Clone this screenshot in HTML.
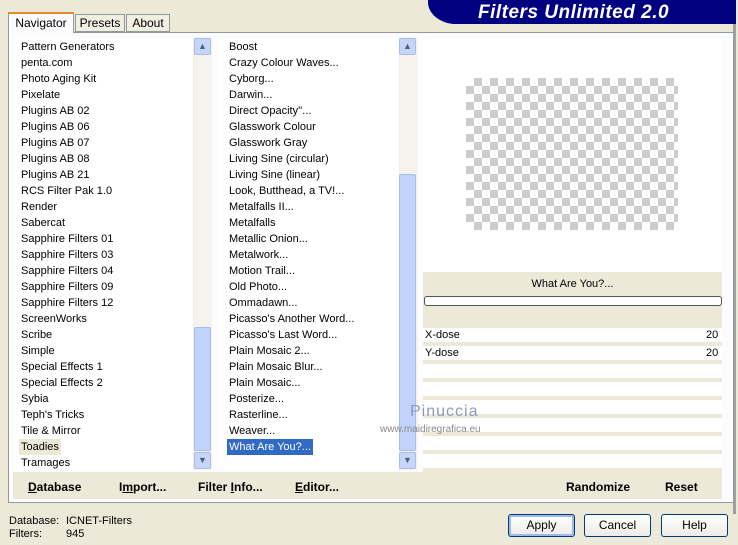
<html><head><style>
*{margin:0;padding:0;box-sizing:border-box}
body{width:738px;height:545px;background:#ece9d8;font-family:"Liberation Sans",sans-serif;font-size:11px;color:#000;position:relative;overflow:hidden}
.a{position:absolute}
.list{background:#fff}
.it{position:absolute;left:8px;height:16px;line-height:16px;white-space:nowrap}
.sb{position:absolute;background:#f4f3ee;border-left:1px solid #eee}
.arr{position:absolute;width:17px;height:17px;background:#c7d6f7;border:1px solid #a8bde8;border-radius:2px;color:#4d6185;font-size:9px;text-align:center;line-height:15px}
.thumb{position:absolute;background:#c1d3fb;border:1px solid #a6bcec;border-radius:2px}
.btn{position:absolute;top:514px;height:23px;border:1px solid #003c74;border-radius:3px;background:linear-gradient(#fff,#ecebe6);text-align:center;line-height:21px;font-size:12px}
.bb{position:absolute;top:480px;font-weight:bold;font-size:12px}
.row{position:absolute;left:423px;width:299px;height:16px;background:#fff;border-bottom:2px solid #ece9d8}
</style></head><body>
<!-- banner -->
<div class="a" style="left:428px;top:0;width:308px;height:24px;background:#000080;border-bottom-left-radius:28px 22px"></div>
<div class="a" style="left:478px;top:2px;color:#fff;font-weight:bold;font-style:italic;font-size:19px;letter-spacing:0.5px">Filters Unlimited 2.0</div>
<div class="a" style="left:733px;top:24px;width:3px;height:490px;background:#a0a0a0"></div>
<!-- tabs -->
<div class="a" style="left:8px;top:32px;width:726px;height:471px;border:1px solid #919b9c;background:#fcfcfe"></div>
<div class="a" style="left:8px;top:12px;width:66px;height:21px;border:1px solid #919b9c;border-bottom:none;border-top:2px solid #e68b2c;background:#fcfcfe;text-align:center;line-height:18px;font-size:12px">Navigator</div>
<div class="a" style="left:75px;top:14px;width:50px;height:18px;border:1px solid #919b9c;background:#f1efe2;text-align:center;line-height:17px;font-size:12px">Presets</div>
<div class="a" style="left:126px;top:14px;width:44px;height:18px;border:1px solid #919b9c;background:#f1efe2;text-align:center;line-height:17px;font-size:12px">About</div>
<!-- left list -->
<div class="a list" style="left:13px;top:37px;width:199px;height:433px">
<div class="it" style="top:2px">Pattern Generators</div><div class="it" style="top:18px">penta.com</div><div class="it" style="top:34px">Photo Aging Kit</div><div class="it" style="top:50px">Pixelate</div><div class="it" style="top:66px">Plugins AB 02</div><div class="it" style="top:82px">Plugins AB 06</div><div class="it" style="top:98px">Plugins AB 07</div><div class="it" style="top:114px">Plugins AB 08</div><div class="it" style="top:130px">Plugins AB 21</div><div class="it" style="top:146px">RCS Filter Pak 1.0</div><div class="it" style="top:162px">Render</div><div class="it" style="top:178px">Sabercat</div><div class="it" style="top:194px">Sapphire Filters 01</div><div class="it" style="top:210px">Sapphire Filters 03</div><div class="it" style="top:226px">Sapphire Filters 04</div><div class="it" style="top:242px">Sapphire Filters 09</div><div class="it" style="top:258px">Sapphire Filters 12</div><div class="it" style="top:274px">ScreenWorks</div><div class="it" style="top:290px">Scribe</div><div class="it" style="top:306px">Simple</div><div class="it" style="top:322px">Special Effects 1</div><div class="it" style="top:338px">Special Effects 2</div><div class="it" style="top:354px">Sybia</div><div class="it" style="top:370px">Teph's Tricks</div><div class="it" style="top:386px">Tile &amp; Mirror</div><div class="it" style="top:402px;left:6px;padding:0 2px;background:#ece9d8">Toadies</div><div class="it" style="top:418px">Tramages</div>
<div class="sb" style="left:180px;top:0;width:19px;height:433px"></div>
<div class="arr" style="left:181px;top:1px">▲</div>
<div class="thumb" style="left:181px;top:290px;width:17px;height:124px"></div>
<div class="arr" style="left:181px;top:415px">▼</div>
</div>
<!-- middle list -->
<div class="a list" style="left:217px;top:37px;width:202px;height:433px">
<div class="it" style="top:2px;left:12px">Boost</div><div class="it" style="top:18px;left:12px">Crazy Colour Waves...</div><div class="it" style="top:34px;left:12px">Cyborg...</div><div class="it" style="top:50px;left:12px">Darwin...</div><div class="it" style="top:66px;left:12px">Direct Opacity''...</div><div class="it" style="top:82px;left:12px">Glasswork Colour</div><div class="it" style="top:98px;left:12px">Glasswork Gray</div><div class="it" style="top:114px;left:12px">Living Sine (circular)</div><div class="it" style="top:130px;left:12px">Living Sine (linear)</div><div class="it" style="top:146px;left:12px">Look, Butthead, a TV!...</div><div class="it" style="top:162px;left:12px">Metalfalls II...</div><div class="it" style="top:178px;left:12px">Metalfalls</div><div class="it" style="top:194px;left:12px">Metallic Onion...</div><div class="it" style="top:210px;left:12px">Metalwork...</div><div class="it" style="top:226px;left:12px">Motion Trail...</div><div class="it" style="top:242px;left:12px">Old Photo...</div><div class="it" style="top:258px;left:12px">Ommadawn...</div><div class="it" style="top:274px;left:12px">Picasso's Another Word...</div><div class="it" style="top:290px;left:12px">Picasso's Last Word...</div><div class="it" style="top:306px;left:12px">Plain Mosaic 2...</div><div class="it" style="top:322px;left:12px">Plain Mosaic Blur...</div><div class="it" style="top:338px;left:12px">Plain Mosaic...</div><div class="it" style="top:354px;left:12px">Posterize...</div><div class="it" style="top:370px;left:12px">Rasterline...</div><div class="it" style="top:386px;left:12px">Weaver...</div><div class="it" style="top:402px;left:10px;padding:0 2px;background:#316ac5;color:#fff">What Are You?...</div>
<div class="sb" style="left:182px;top:0;width:19px;height:433px"></div>
<div class="arr" style="left:182px;top:1px">▲</div>
<div class="thumb" style="left:182px;top:137px;width:17px;height:277px"></div>
<div class="arr" style="left:182px;top:415px">▼</div>
</div>
<!-- preview -->
<div class="a" style="left:423px;top:37px;width:300px;height:235px;background:#fff"></div>
<div class="a" style="left:466px;top:78px;width:212px;height:152px;background-color:#fff;background-image:linear-gradient(45deg,#c4c4c4 25%,transparent 25%,transparent 75%,#c4c4c4 75%),linear-gradient(45deg,#c4c4c4 25%,transparent 25%,transparent 75%,#c4c4c4 75%);background-size:16px 16px;background-position:0 0,8px 8px;opacity:.85"></div>
<div class="a" style="left:423px;top:272px;width:299px;height:200px;background:#ece9d8"></div>
<div class="a" style="left:423px;top:278px;width:299px;text-align:center;font-size:11px">What Are You?...</div>
<div class="a" style="left:424px;top:296px;width:298px;height:10px;border:1px solid #555;border-radius:3px;background:#fff"></div>
<div class="row" style="top:328px"></div><div class="row" style="top:346px"></div><div class="row" style="top:364px"></div><div class="row" style="top:382px"></div><div class="row" style="top:400px"></div><div class="row" style="top:418px"></div><div class="row" style="top:436px"></div><div class="row" style="top:454px"></div>
<div class="a" style="left:425px;top:329px">X-dose</div><div class="a" style="left:706px;top:329px">20</div>
<div class="a" style="left:425px;top:347px">Y-dose</div><div class="a" style="left:706px;top:347px">20</div>
<div class="a" style="left:410px;top:403px;color:#8a9ab8;font-size:16px;letter-spacing:1px">Pinuccia</div>
<div class="a" style="left:380px;top:424px;color:#8a8a8a;font-size:10px">www.maidiregrafica.eu</div>
<!-- bottom bar -->
<div class="a" style="left:13px;top:472px;width:709px;height:27px;background:#ece9d8"></div>
<div class="bb" style="left:28px"><u>D</u>atabase</div>
<div class="bb" style="left:119px">I<u>m</u>port...</div>
<div class="bb" style="left:198px">Filter <u>I</u>nfo...</div>
<div class="bb" style="left:295px"><u>E</u>ditor...</div>
<div class="bb" style="left:566px">Randomize</div>
<div class="bb" style="left:665px">Reset</div>
<div class="a" style="left:9px;top:515px">Database:</div><div class="a" style="left:66px;top:515px">ICNET-Filters</div>
<div class="a" style="left:9px;top:528px">Filters:</div><div class="a" style="left:66px;top:528px">945</div>
<div class="btn" style="left:508px;width:67px;box-shadow:inset 0 0 0 2px #9db9eb">Apply</div>
<div class="btn" style="left:584px;width:67px">Cancel</div>
<div class="btn" style="left:661px;width:67px">Help</div>
</body></html>
